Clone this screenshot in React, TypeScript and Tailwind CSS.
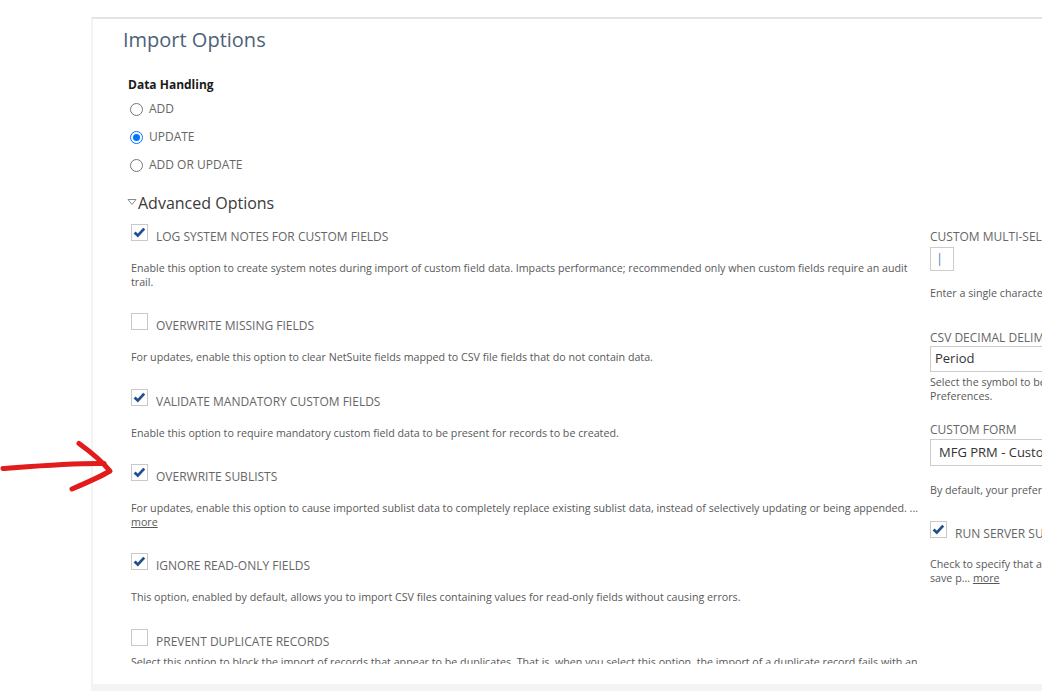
import React from "react";

const font = { fontFamily: '"Open Sans", "Liberation Sans", sans-serif' };

function Check({ checked }: { checked: boolean }) {
  return (
    <span className="w-[17px] h-[17px] shrink-0 border border-[#c9c9c9] bg-white flex items-center justify-center">
      {checked && (
        <svg width="15" height="15" viewBox="0 0 15 15">
          <path d="M2.6 7.6 L5.8 10.6 L12.2 3.6" fill="none" stroke="#234f8e" strokeWidth="2.8" strokeLinejoin="miter" />
        </svg>
      )}
    </span>
  );
}

function Radio({ checked, label }: { checked: boolean; label: string }) {
  return (
    <div className="h-[28px] flex items-center">
      <span
        className="ml-[2px] w-[13px] h-[13px] rounded-full flex items-center justify-center border border-[#767676] bg-white shrink-0"
        style={checked ? { borderColor: "#0075ff", borderWidth: 1.5 } : undefined}
      >
        {checked && <span className="w-[7px] h-[7px] rounded-full bg-[#0075ff]" />}
      </span>
      <span className="ml-[6px] text-[12px] leading-[28px] text-[#666]">{label}</span>
    </div>
  );
}

function Item({
  checked,
  label,
  lines,
  more,
  gap = "mt-[16px]",
  mb = "mb-[24px]",
}: {
  checked: boolean;
  label: string;
  lines: string[];
  more?: boolean;
  gap?: string;
  mb?: string;
}) {
  return (
    <div className={mb}>
      <div className="flex items-start">
        <Check checked={checked} />
        <span className="ml-[8px] mt-[5px] text-[12px] leading-[16px] text-[#666] whitespace-nowrap">{label}</span>
      </div>
      <div className={`${gap} text-[10.7px] leading-[14px] text-[#595959]`}>
        {lines.map((l, i) => (
          <div key={i} className="whitespace-nowrap">
            {l}
          </div>
        ))}
        {more && <div className="underline">more</div>}
      </div>
    </div>
  );
}

export default function App() {
  return (
    <div className="relative w-[1042px] h-[691px] overflow-hidden bg-white flex" style={font}>
      <div className="w-[91px] shrink-0" />
      <div className="flex-1 min-w-0 flex flex-col pt-[17px]">
        <div className="flex-1 min-h-0 flex flex-col border-t-2 border-t-[#e4e4e4] border-l-2 border-l-[#f3f3f3]">
          <div className="h-[645px] overflow-hidden pl-[30px] pt-[7px]">
            <div className="text-[20px] leading-[28px] text-[#4e5f78]">Import Options</div>
            <div className="mt-[23px] ml-[5px] text-[12px] leading-[16px] font-bold text-[#1b1b1b]">Data Handling</div>
            <div className="mt-[2px] ml-[5px]">
              <Radio checked={false} label="ADD" />
              <Radio checked={true} label="UPDATE" />
              <Radio checked={false} label="ADD OR UPDATE" />
            </div>
            <div className="mt-[14px] ml-[4px] flex items-center h-[20px]">
              <svg width="10" height="8" viewBox="0 0 10 8" className="mr-[1px] mt-[-2px]">
                <path d="M1 1.5 L9 1.5 L5 6.5 Z" fill="none" stroke="#8a8a8a" strokeWidth="1" />
              </svg>
              <span className="text-[16px] leading-[20px] text-[#3a3a3a]">Advanced Options</span>
            </div>
            <div className="mt-[11px] ml-[8px] flex">
              <div className="w-[790px] shrink-0">
                <Item
                  checked
                  label="LOG SYSTEM NOTES FOR CUSTOM FIELDS"
                  lines={[
                    "Enable this option to create system notes during import of custom field data. Impacts performance; recommended only when custom fields require an audit",
                    "trail.",
                  ]}
                />
                <Item
                  checked={false}
                  label="OVERWRITE MISSING FIELDS"
                  mb="mb-[25px]"
                  lines={["For updates, enable this option to clear NetSuite fields mapped to CSV file fields that do not contain data."]}
                />
                <Item
                  checked
                  label="VALIDATE MANDATORY CUSTOM FIELDS"
                  mb="mb-[24px]"
                  lines={["Enable this option to require mandatory custom field data to be present for records to be created."]}
                />
                <Item
                  checked
                  label="OVERWRITE SUBLISTS"
                  lines={[
                    "For updates, enable this option to cause imported sublist data to completely replace existing sublist data, instead of selectively updating or being appended. ...",
                  ]}
                  more
                />
                <Item
                  checked
                  label="IGNORE READ-ONLY FIELDS"
                  mb="mb-[25px]"
                  lines={["This option, enabled by default, allows you to import CSV files containing values for read-only fields without causing errors."]}
                />
                <Item
                  checked={false}
                  label="PREVENT DUPLICATE RECORDS"
                  gap="mt-[5px]"
                  mb="mb-0"
                  lines={[
                    "Select this option to block the import of records that appear to be duplicates. That is, when you select this option, the import of a duplicate record fails with an",
                    "error.",
                  ]}
                />
              </div>
              <div className="ml-[9px] w-[320px] shrink-0">
                <div className="mt-[5px] text-[12px] leading-[16px] text-[#666] whitespace-nowrap">CUSTOM MULTI-SELECT FIELD SEPARATOR</div>
                <div className="mt-[2px] w-[24px] h-[24px] border border-[#cccccc] flex items-center pl-[5px] text-[13px] text-[#4a7fc0]">|</div>
                <div className="mt-[15px] text-[10.7px] leading-[14px] text-[#595959] whitespace-nowrap">
                  Enter a single character to use as the separator for multi-select field values.
                </div>
                <div className="mt-[30px] text-[12px] leading-[16px] text-[#666] whitespace-nowrap">CSV DECIMAL DELIMITER</div>
                <div className="w-[260px] h-[26px] border border-[#cccccc] flex items-center pl-[4px] text-[13px] text-[#333]">Period</div>
                <div className="mt-[3px] text-[10.7px] leading-[14px] text-[#595959]">
                  <div className="whitespace-nowrap">Select the symbol to be used as the decimal delimiter. The default is set in your</div>
                  <div className="whitespace-nowrap">Preferences.</div>
                </div>
                <div className="mt-[19px] text-[12px] leading-[16px] text-[#666] whitespace-nowrap">CUSTOM FORM</div>
                <div className="mt-[1px] w-[260px] h-[27px] border border-[#cccccc] flex items-center pl-[8px] text-[13px] text-[#333] whitespace-nowrap">
                  MFG PRM - Custom Customer Form
                </div>
                <div className="mt-[17px] text-[10.7px] leading-[14px] text-[#595959] whitespace-nowrap">
                  By default, your preferred form is used for the import.
                </div>
                <div className="mt-[24px] flex items-start">
                  <Check checked />
                  <span className="ml-[8px] mt-[5px] text-[12px] leading-[16px] text-[#666] whitespace-nowrap">
                    RUN SERVER SUITESCRIPT AND TRIGGER WORKFLOWS
                  </span>
                </div>
                <div className="mt-[15px] text-[10.7px] leading-[14px] text-[#595959]">
                  <div className="whitespace-nowrap">Check to specify that any server SuiteScripts and workflows are triggered by the</div>
                  <div className="whitespace-nowrap">
                    save p... <span className="underline">more</span>
                  </div>
                </div>
              </div>
            </div>
          </div>
          <div className="flex-1" />
        </div>
        <div className="h-[7px] bg-[#f4f4f4]" />
      </div>
      <svg className="absolute left-0 top-[440px]" width="120" height="56" viewBox="0 0 120 56">
        <path d="M3 28.5 C 30 26.5, 70 23, 104 23.5" fill="none" stroke="#e21b1b" strokeWidth="5" strokeLinecap="round" />
        <path
          d="M79 3.5 C 88 10, 100 19, 110 31 C 100 37, 86 43, 72 49"
          fill="none"
          stroke="#e21b1b"
          strokeWidth="5"
          strokeLinecap="round"
          strokeLinejoin="round"
        />
      </svg>
    </div>
  );
}
